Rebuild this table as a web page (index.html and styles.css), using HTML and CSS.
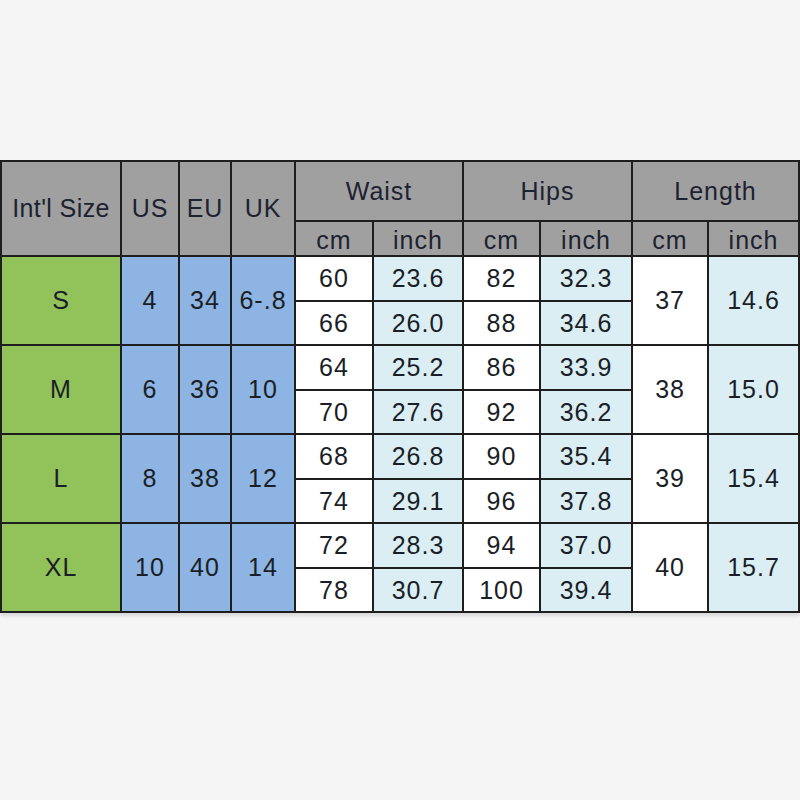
FILE: index.html
```html
<!DOCTYPE html>
<html>
<head>
<meta charset="utf-8">
<link rel="stylesheet" href="styles.css">
</head>
<body>
<div class="page">
<table class="chart">
  <colgroup>
    <col class="w-size"><col class="w-us"><col class="w-eu"><col class="w-uk">
    <col class="w-wc"><col class="w-wi"><col class="w-hc"><col class="w-hi">
    <col class="w-lc"><col class="w-li">
  </colgroup>
  <thead>
    <tr class="h1">
      <th rowspan="2" class="tight">Int'l Size</th>
      <th rowspan="2">US</th>
      <th rowspan="2">EU</th>
      <th rowspan="2">UK</th>
      <th colspan="2">Waist</th>
      <th colspan="2">Hips</th>
      <th colspan="2">Length</th>
    </tr>
    <tr class="h2">
      <th>cm</th><th>inch</th><th>cm</th><th>inch</th><th>cm</th><th>inch</th>
    </tr>
  </thead>
  <tbody>
    <tr class="ra">
      <td rowspan="2" class="size">S</td>
      <td rowspan="2" class="conv">4</td>
      <td rowspan="2" class="conv">34</td>
      <td rowspan="2" class="conv">6-.8</td>
      <td class="cm">60</td><td class="in">23.6</td><td class="cm">82</td><td class="in">32.3</td>
      <td rowspan="2" class="cm">37</td>
      <td rowspan="2" class="in">14.6</td>
    </tr>
    <tr class="rb">
      <td class="cm">66</td><td class="in">26.0</td><td class="cm">88</td><td class="in">34.6</td>
    </tr>
    <tr class="ra">
      <td rowspan="2" class="size">M</td>
      <td rowspan="2" class="conv">6</td>
      <td rowspan="2" class="conv">36</td>
      <td rowspan="2" class="conv">10</td>
      <td class="cm">64</td><td class="in">25.2</td><td class="cm">86</td><td class="in">33.9</td>
      <td rowspan="2" class="cm">38</td>
      <td rowspan="2" class="in">15.0</td>
    </tr>
    <tr class="rb">
      <td class="cm">70</td><td class="in">27.6</td><td class="cm">92</td><td class="in">36.2</td>
    </tr>
    <tr class="ra">
      <td rowspan="2" class="size">L</td>
      <td rowspan="2" class="conv">8</td>
      <td rowspan="2" class="conv">38</td>
      <td rowspan="2" class="conv">12</td>
      <td class="cm">68</td><td class="in">26.8</td><td class="cm">90</td><td class="in">35.4</td>
      <td rowspan="2" class="cm">39</td>
      <td rowspan="2" class="in">15.4</td>
    </tr>
    <tr class="rb">
      <td class="cm">74</td><td class="in">29.1</td><td class="cm">96</td><td class="in">37.8</td>
    </tr>
    <tr class="ra">
      <td rowspan="2" class="size">XL</td>
      <td rowspan="2" class="conv">10</td>
      <td rowspan="2" class="conv">40</td>
      <td rowspan="2" class="conv">14</td>
      <td class="cm">72</td><td class="in">28.3</td><td class="cm">94</td><td class="in">37.0</td>
      <td rowspan="2" class="cm">40</td>
      <td rowspan="2" class="in">15.7</td>
    </tr>
    <tr class="rb">
      <td class="cm">78</td><td class="in">30.7</td><td class="cm">100</td><td class="in">39.4</td>
    </tr>
  </tbody>
</table>
</div>
</body>
</html>
```
FILE: styles.css
```css
html, body {
  margin: 0;
  padding: 0;
  background: #f5f5f5;
  overflow: hidden;
}
.page {
  width: 800px;
  height: 800px;
  padding-top: 160px;
  box-sizing: border-box;
}
.chart {
  border-collapse: collapse;
  table-layout: fixed;
  width: 800px;
  font-family: "Liberation Sans", Arial, sans-serif;
  font-size: 25px;
  letter-spacing: 1px;
  color: #1a1e26;
  box-shadow: 0 3px 4px rgba(0, 0, 0, 0.12);
}
.chart th, .chart td {
  border: 2px solid #1e1e1e;
  padding: 0;
  text-align: center;
  vertical-align: middle;
  font-weight: normal;
  white-space: nowrap;
  overflow: hidden;
}
.chart th {
  background: #a0a0a0;
  color: #1d2230;
}
.chart th.tight { letter-spacing: 0.4px; }
.w-size { width: 120px; }
.w-us { width: 58px; }
.w-eu { width: 52px; }
.w-uk { width: 64px; }
.w-wc { width: 78px; }
.w-wi { width: 90px; }
.w-hc { width: 77px; }
.w-hi { width: 92px; }
.w-lc { width: 76px; }
.w-li { width: 91px; }
.h1 { height: 60px; }
.h2 { height: 32px; }
.h2 th { padding-top: 4px; }
.ra { height: 45px; }
.rb { height: 44px; }
.size { background: #92c25a; }
.conv { background: #8db4e2; }
.cm { background: #ffffff; }
.in { background: #dbeef4; }
```
